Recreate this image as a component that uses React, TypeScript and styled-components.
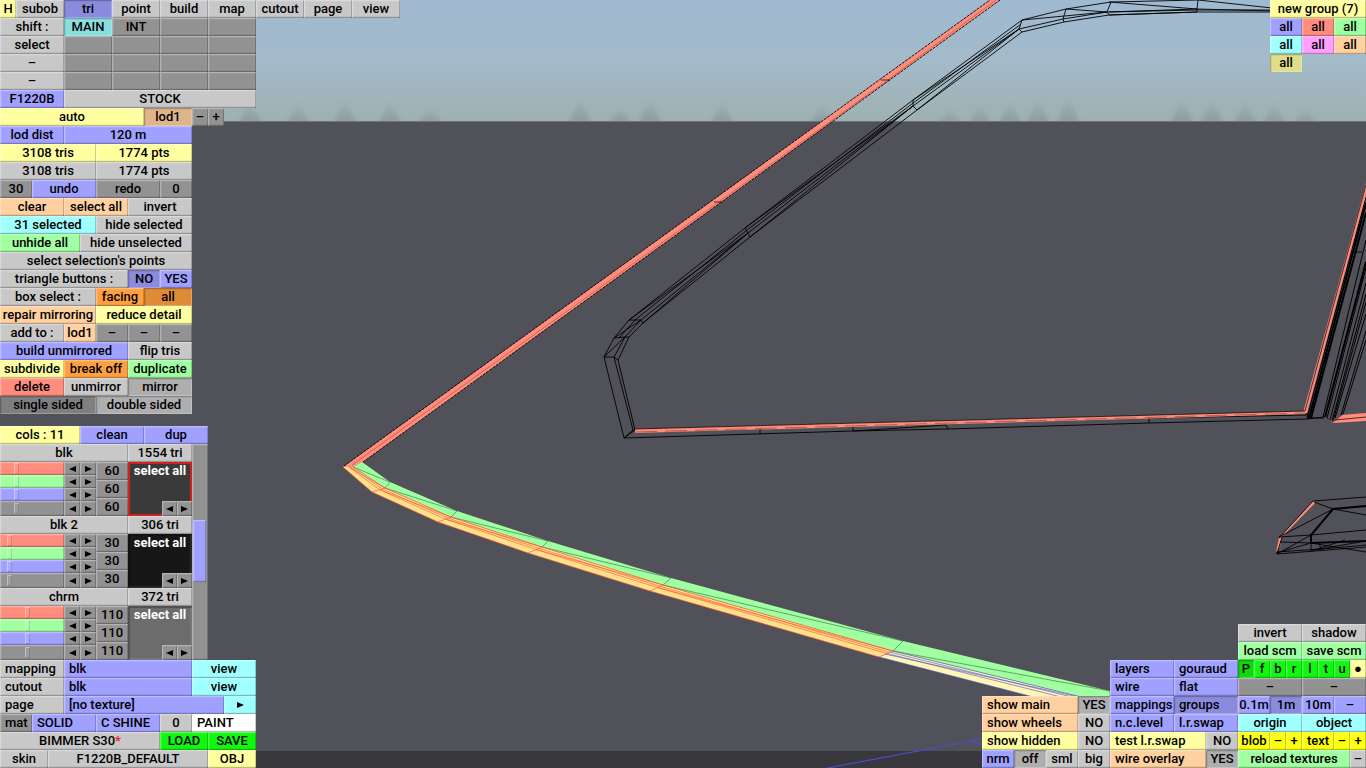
import React, { useState } from 'react';
import styled, { createGlobalStyle, css } from 'styled-components';

const UNIT = 16;

const tones = {
  grey: '#c8c8c8',
  slot: '#929292',
  dark: '#929292',
  purple: '#a0a0ff',
  yellow: '#ffffa0',
  peach: '#ffd0a0',
  cyan: '#a0ffff',
  green: '#a0ffa0',
  red: '#ff8c7c',
  orange: '#ffa040',
  pink: '#ffa0ff',
  lime: '#10f810',
  lemon: '#ffff10',
  white: '#ffffff',
};
type Tone = keyof typeof tones;

const GlobalStyle = createGlobalStyle`
  *, *::before, *::after { box-sizing: border-box; }
  body { margin: 0; background: #515159; }
  body, button, input { font-family: Roboto, "Liberation Sans", sans-serif; font-size: 13px; font-weight: 500; }
`;

const Page = styled.main`
  position: relative;
  display: flex;
  justify-content: space-between;
  min-height: 100vh;
  overflow: hidden;
`;

const Scene = styled.svg`
  position: absolute;
  inset: 0;
  width: 100%;
  height: 100%;
`;

const Side = styled.div<{ $end?: boolean }>`
  position: relative;
  display: flex;
  flex-direction: column;
  align-items: ${(p) => (p.$end ? 'flex-end' : 'flex-start')};
  justify-content: space-between;
  gap: 12px;
`;

const Stack = styled.section`
  display: flex;
  flex-direction: column;
`;

const Cluster = styled.section`
  display: flex;
  align-items: flex-end;
`;

const Row = styled.div`
  display: flex;
  height: 18px;
`;

const bevel = css<{ $down?: boolean }>`
  box-shadow: ${(p) =>
    p.$down
      ? 'inset 1px 1px 0 rgba(0,0,0,.18), inset 2px 2px 0 rgba(0,0,0,.06), inset -1px -1px 0 rgba(255,255,255,.22)'
      : 'inset 1px 1px 0 rgba(255,255,255,.26), inset 0 -1px 0 rgba(0,0,0,.22), inset -1px 0 0 rgba(0,0,0,.2), inset 0 -2px 0 rgba(0,0,0,.05), inset 2px 2px 0 rgba(255,255,255,.08)'};
`;

const cellBase = css<{ $w: number; $tone: Tone; $left?: boolean; $down?: boolean }>`
  flex: none;
  width: ${(p) => p.$w * UNIT}px;
  height: 18px;
  margin: 0;
  padding: 0 ${(p) => (p.$left ? 5 : 0)}px;
  border: 0;
  border-radius: 0;
  background-color: ${(p) => tones[p.$tone]};
  background-image: ${(p) => (p.$down ? 'linear-gradient(rgba(0,0,0,.13), rgba(0,0,0,.13))' : 'none')};
  color: #000;
  line-height: 18px;
  text-align: ${(p) => (p.$left ? 'left' : 'center')};
  white-space: nowrap;
  ${bevel}
`;

const Button = styled.button`
  ${cellBase}
  cursor: pointer;
`;
const Label = styled.span`
  ${cellBase}
`;
const Field = styled.input`
  ${cellBase}
  outline: none;
`;

const Star = styled.span`
  color: #ff2020;
  font-weight: 700;
`;

const Browser = styled.div`
  display: flex;
`;

const Card = styled.div`
  display: flex;
  flex-direction: column;
`;

const CardBody = styled.div`
  display: flex;
  height: 54px;
`;

const Channels = styled.div`
  display: grid;
  grid-template-columns: 64px 16px 16px;
  grid-template-rows: 13px 13px 13px 15px;
`;

const Slider = styled.input<{ $tone: Tone }>`
  appearance: none;
  width: 100%;
  height: 100%;
  margin: 0;
  background: ${(p) => tones[p.$tone]};
  ${bevel}
  &::-webkit-slider-thumb {
    appearance: none;
    width: 5px;
    height: 11px;
    background: rgba(255, 255, 255, 0.1);
    box-shadow: inset 1px 1px 0 rgba(255, 255, 255, 0.35), inset -1px -1px 0 rgba(0, 0, 0, 0.15);
  }
`;

const ArrowButton = styled.button<{ $cyan?: boolean; $wide?: boolean }>`
  display: flex;
  align-items: center;
  justify-content: center;
  flex: 0 0 ${(p) => (p.$wide ? 32 : 15)}px;
  padding: 0;
  border: 0;
  background: ${(p) => (p.$cyan ? tones.cyan : tones.slot)};
  cursor: pointer;
  ${bevel}
`;

const Values = styled.div`
  display: flex;
  flex-direction: column;
  width: 32px;
`;

const Value = styled.output`
  height: 18px;
  background: ${tones.slot};
  line-height: 18px;
  text-align: center;
  ${bevel}
`;

const Swatch = styled.div<{ $colour: string; $active?: boolean }>`
  display: flex;
  flex-direction: column;
  justify-content: space-between;
  width: 64px;
  background: ${(p) => p.$colour};
  box-shadow: ${(p) =>
    p.$active ? 'inset 0 0 0 2px #d02020' : 'inset 2px 2px 0 rgba(0,0,0,.25), inset -2px -2px 0 rgba(255,255,255,.08)'};
`;

const SwatchButton = styled.button`
  height: 18px;
  padding: 0;
  border: 0;
  background: none;
  color: #fff;
  font-weight: 700;
  line-height: 18px;
  white-space: nowrap;
  cursor: pointer;
`;

const SwatchArrows = styled.div`
  display: flex;
  justify-content: flex-end;
  height: 15px;
`;

const ScrollTrack = styled.div`
  width: 16px;
  padding: 76px 2px 0 1px;
  background: ${tones.slot};
  ${bevel}
`;

const ScrollThumb = styled.div`
  height: 62px;
  background: ${tones.purple};
  ${bevel}
`;

interface Cell {
  t: React.ReactNode;
  w: number;
  tone?: Tone;
  down?: boolean;
  left?: boolean;
  kind?: 'label' | 'field';
  name?: string;
}

const b = (t: React.ReactNode, w: number, tone: Tone = 'grey', down = false): Cell => ({ t, w, tone, down });
const bl = (t: React.ReactNode, w: number, tone: Tone = 'grey', down = false): Cell => ({ t, w, tone, down, left: true });
const l = (t: React.ReactNode, w: number, tone: Tone = 'grey', left = false): Cell => ({ t, w, tone, left, kind: 'label' });
const f = (t: string, w: number, tone: Tone, name: string, left = true): Cell => ({ t, w, tone, left, kind: 'field', name });
const slots = (n: number): Cell[] => Array.from({ length: n }, () => l('', 3, 'slot'));

function Cells({ rows }: { rows: Cell[][] }) {
  return (
    <>
      {rows.map((row, i) => (
        <Row key={i}>
          {row.map((c, j) => {
            const style = { $w: c.w, $tone: c.tone ?? ('grey' as Tone), $left: c.left, $down: c.down };
            if (c.kind === 'label') return <Label key={j} {...style}>{c.t}</Label>;
            if (c.kind === 'field')
              return <Field key={j} {...style} type="text" aria-label={c.name} defaultValue={c.t as string} />;
            return <Button key={j} type="button" aria-pressed={c.down} {...style}>{c.t}</Button>;
          })}
        </Row>
      ))}
    </>
  );
}

const menuRows: Cell[][] = [
  [b('H', 1, 'yellow'), b('subob', 3), b('tri', 3, 'purple', true), b('point', 3), b('build', 3), b('map', 3), b('cutout', 3), b('page', 3), b('view', 3)],
  [l('shift :', 4), b('MAIN', 3, 'cyan', true), b('INT', 3, 'dark'), ...slots(2)],
  [b('select', 4), ...slots(4)],
  [b('–', 4), ...slots(4)],
  [b('–', 4), ...slots(4)],
  [b('F1220B', 4, 'purple'), b('STOCK', 12)],
  [b('auto', 9, 'yellow'), b('lod1', 3, 'peach', true), b('–', 1, 'dark'), b('+', 1, 'dark')],
  [l('lod dist', 4, 'purple'), f('120 m', 8, 'purple', 'lod dist', false)],
  [l('3108 tris', 6, 'yellow'), l('1774 pts', 6, 'yellow')],
  [l('3108 tris', 6), l('1774 pts', 6)],
  [l('30', 2, 'dark'), b('undo', 4, 'purple'), b('redo', 4, 'dark'), l('0', 2, 'dark')],
  [b('clear', 4, 'peach'), b('select all', 4, 'peach'), b('invert', 4)],
  [b('31 selected', 6, 'cyan'), b('hide selected', 6)],
  [b('unhide all', 5, 'green'), b('hide unselected', 7)],
  [b("select selection's points", 12)],
  [l('triangle buttons :', 8), b('NO', 2, 'purple', true), b('YES', 2, 'purple')],
  [l('box select :', 6), b('facing', 3, 'orange'), b('all', 3, 'orange', true)],
  [b('repair mirroring', 6, 'peach'), b('reduce detail', 6, 'yellow')],
  [l('add to :', 4), b('lod1', 2, 'peach'), b('–', 2, 'dark'), b('–', 2, 'dark'), b('–', 2, 'dark')],
  [b('build unmirrored', 8, 'purple'), b('flip tris', 4)],
  [b('subdivide', 4, 'yellow'), b('break off', 4, 'orange'), b('duplicate', 4, 'green')],
  [b('delete', 4, 'red'), b('unmirror', 4), b('mirror', 4, 'grey', true)],
  [b('single sided', 6, 'dark', true), b('double sided', 6, 'grey', true)],
];

const paletteRows: Cell[][] = [[l('cols : 11', 5, 'yellow'), b('clean', 4, 'purple'), b('dup', 4, 'purple')]];

const materialRows: Cell[][] = [
  [bl('mat', 2, 'dark'), bl('SOLID', 4, 'purple'), bl('C SHINE', 4, 'purple'), b('0', 2), bl('PAINT', 4, 'white')],
  [b(<>BIMMER S30<Star>*</Star></>, 10), b('LOAD', 3, 'lime'), b('SAVE', 3, 'lime')],
  [b('skin', 3), b('F1220B_DEFAULT', 10), b('OBJ', 3, 'yellow')],
];

const mappingRows: Cell[][] = [
  [l('mapping', 4, 'grey', true), f('blk', 8, 'purple', 'mapping'), b('view', 4, 'cyan')],
  [l('cutout', 4, 'grey', true), f('blk', 8, 'purple', 'cutout'), b('view', 4, 'cyan')],
];

const groupRows: Cell[][] = [
  [b('new group (7)', 6, 'yellow')],
  [b('all', 2, 'purple'), b('all', 2, 'red'), b('all', 2, 'green')],
  [b('all', 2, 'cyan'), b('all', 2, 'pink'), b('all', 2, 'peach')],
  [b('all', 2, 'yellow', true)],
];

const showRows: Cell[][] = [
  [bl('show main', 6, 'peach'), b('YES', 2, 'grey', true)],
  [bl('show wheels', 6, 'peach'), b('NO', 2)],
  [bl('show hidden', 6, 'yellow'), b('NO', 2)],
  [b('nrm', 2, 'purple'), b('off', 2, 'grey', true), b('sml', 2), b('big', 2)],
];

const layerRows: Cell[][] = [
  [bl('layers', 4, 'purple'), bl('gouraud', 4, 'purple')],
  [bl('wire', 4, 'purple'), bl('flat', 4, 'purple')],
  [bl('mappings', 4, 'purple'), bl('groups', 4, 'purple', true)],
  [bl('n.c.level', 4, 'purple'), bl('l.r.swap', 4, 'purple')],
  [bl('test l.r.swap', 6, 'yellow'), b('NO', 2)],
  [bl('wire overlay', 6, 'peach'), b('YES', 2, 'grey', true)],
];

const viewRows: Cell[][] = [
  [b('invert', 4), b('shadow', 4)],
  [b('load scm', 4, 'green'), b('save scm', 4, 'green')],
  [b('P', 1, 'lime', true), ...['f', 'b', 'r', 'l', 't', 'u'].map((k) => b(k, 1, 'lime')), b('●', 1, 'yellow')],
  [b('–', 4, 'dark'), b('–', 4, 'dark')],
  [b('0.1m', 2, 'purple'), b('1m', 2, 'purple', true), b('10m', 2, 'purple'), b('–', 2, 'purple')],
  [b('origin', 4, 'cyan'), b('object', 4, 'cyan')],
  [b('blob', 2, 'lemon'), b('–', 1, 'lemon'), b('+', 1, 'lemon'), b('text', 2, 'lemon'), b('–', 1, 'lemon'), b('+', 1, 'lemon')],
  [b('reload textures', 7, 'green'), b('–', 1)],
];

function Arrow({ dir, name, cyan, wide }: { dir: 'left' | 'right'; name: string; cyan?: boolean; wide?: boolean }) {
  return (
    <ArrowButton type="button" aria-label={name} $cyan={cyan} $wide={wide}>
      <svg width="9" height="8" viewBox="0 0 9 8" aria-hidden="true">
        <path d={dir === 'left' ? 'M8 1v6L1 4z' : 'M1 1v6L8 4z'} fill="#000" />
      </svg>
    </ArrowButton>
  );
}

const channelTones: [string, Tone][] = [['red', 'red'], ['green', 'green'], ['blue', 'purple'], ['all', 'slot']];

function Material({ name, tris, start, colour, active }: { name: string; tris: number; start: number; colour: string; active?: boolean }) {
  const [rgb, setRgb] = useState([start, start, start]);
  return (
    <Card>
      <Cells rows={[[b(name, 8), l(`${tris} tri`, 4)]]} />
      <CardBody>
        <Channels>
          {channelTones.map(([channel, tone], i) => (
            <React.Fragment key={channel}>
              <Slider
                type="range"
                min={0}
                max={255}
                $tone={tone}
                aria-label={`${name} ${channel}`}
                value={rgb[i % 3]}
                onChange={(e) => {
                  const v = Number(e.target.value);
                  setRgb(i === 3 ? [v, v, v] : rgb.map((old, k) => (k === i ? v : old)));
                }}
              />
              <Arrow dir="left" name={`less ${channel}`} />
              <Arrow dir="right" name={`more ${channel}`} />
            </React.Fragment>
          ))}
        </Channels>
        <Values>
          {rgb.map((v, i) => (
            <Value key={i}>{v}</Value>
          ))}
        </Values>
        <Swatch $colour={colour} $active={active}>
          <SwatchButton type="button">select all</SwatchButton>
          <SwatchArrows>
            <Arrow dir="left" name="previous triangle" />
            <Arrow dir="right" name="next triangle" />
          </SwatchArrows>
        </Swatch>
      </CardBody>
    </Card>
  );
}

type Pt = [number, number];
const toPoints = (pts: Pt[]) => pts.map((p) => p.join(',')).join(' ');
const between = (a: Pt[], z: Pt[], t: number): Pt[] =>
  a.map((p, i) => [p[0] + (z[i][0] - p[0]) * t, p[1] + (z[i][1] - p[1]) * t] as Pt);

const sillTop: Pt[] = [[362, 462], [390, 482], [457, 511], [548, 541], [671, 578], [903, 641], [1110, 691]];
const sillMid: Pt[] = [[353, 467], [385, 488], [451, 517], [542, 547], [663, 585], [893, 651], [1110, 704]];
const trimTop = sillMid.slice(0, 6);
const trimLow: Pt[] = [[343, 467], [372, 492], [438, 522], [528, 553], [650, 591], [879, 657]];
const tailTop = sillMid.slice(5);
const tailLow: Pt[] = [[879, 657], [1068, 706]];

const frameOuter: Pt[] = [[1198, 0], [1111, 2], [1066, 9], [1022, 20], [913, 100], [745, 228], [629, 320], [614, 338], [604, 357], [624, 438]];
const frameMiddle: Pt[] = [[1197, 9], [1107, 12], [1063, 19], [1019, 29], [913, 106], [748, 233], [641, 320], [625, 337], [614, 357], [633, 430]];
const frameInner: Pt[] = [[1197, 12], [1109, 15], [1064, 22], [1022, 32], [917, 110], [750, 237], [643, 323], [629, 337], [618, 360], [635, 430]];

const trees: [number, number][] = [[250, 15], [298, 13], [345, 16], [390, 14], [430, 9], [580, 18], [620, 10], [650, 18], [722, 14], [822, 12], [950, 8], [980, 11], [1010, 14], [1038, 17], [1068, 20], [1182, 18], [1212, 17], [1245, 14], [1274, 13], [1305, 8]];

// Door pillar edges: height at the right edge, foot x, foot y, line width.
const pillarLines: [number, number, number, number][] = [
  [197, 1307, 418, 1], [203, 1309, 418, 2], [213, 1311, 418, 2], [240, 1323, 417, 1], [262, 1325, 417, 2],
  [268, 1327, 418, 1], [283, 1330, 420, 1], [294, 1332, 421, 1], [302, 1333, 421, 1], [314, 1335, 418, 1],
  [331, 1341, 415, 1], [340, 1343, 414, 1],
];

function Viewport() {
  return (
    <Scene viewBox="0 0 1366 768" preserveAspectRatio="xMidYMid slice" aria-hidden="true">
      <defs>
        <linearGradient id="sky" x1="0" y1="0" x2="0" y2="1">
          <stop offset="0" stopColor="#9fb9d1" />
          <stop offset=".5" stopColor="#a3bac9" />
          <stop offset="1" stopColor="#9eb0b1" />
        </linearGradient>
        <linearGradient id="tree" x1="0" y1="0" x2="0" y2="1">
          <stop offset="0" stopColor="#7f9193" stopOpacity="0" />
          <stop offset="1" stopColor="#7f9193" stopOpacity=".7" />
        </linearGradient>
        <filter id="soft"><feGaussianBlur stdDeviation="2" /></filter>
      </defs>
      <rect width="1366" height="122" fill="url(#sky)" />
      <g filter="url(#soft)" fill="url(#tree)">
        {trees.map(([x, h]) => (
          <path key={x} d={`M${x - 13} 126L${x} ${116 - h}L${x + 13} 126z`} />
        ))}
      </g>
      <rect y="121" width="1366" height="647" fill="#515159" />
      <rect y="121" width="1366" height="1" fill="#6b7679" />
      <rect y="751" width="1366" height="17" fill="#38383c" />

      <g fill="none" stroke="#000" strokeWidth=".9">
        {[frameOuter, frameMiddle, frameInner, between(frameOuter, frameMiddle, 0.5).slice(3, 8)].map((line, i) => (
          <polyline key={i} points={toPoints(line)} />
        ))}
        {frameOuter.map((p, i) => (
          <polyline key={i} points={toPoints([p, frameMiddle[i], frameInner[i]])} />
        ))}
        <path d="M1109 2L1197 9L1272 11M1198 0L1272 8M1109 15L1197 12L1272 12M1109 12L1197 10L1272 10" />
        <path d="M1022 20L1107 12M1066 9L1107 12M913 100L1019 29M745 228L913 106M629 320L748 233M917 110L1019 29M750 237L913 106M643 323L748 233M614 338L641 320M604 357L625 337" />
        <path d="M624 438L853 431L948 429L1149 423L1307 419L1324 417M624 438L635 430M760 434V429M853 431V427M853 431L946 425L948 429M1149 423V418L1307 415" />
        {pillarLines.map(([top, x, y, width]) => (
          <path key={top} d={`M1366 ${top}L${x} ${y}`} strokeWidth={width} />
        ))}
        <path d="M1354 252H1362M1307 413L1309 419M1307 418H1324" />
      </g>

      <g fill="#ff8c7c">
        <path d="M343 467L990 0H1000L363 462L353 467z" />
        <path d="M635 429L1305 411V414L635 433z" />
        <path d="M1303 413L1366 183V195L1307 413z" />
        <path d="M1327 418L1333 421L1341 415L1366 413V421L1333 423z" />
        <path d="M1313 501L1279 538L1276 552L1280 547L1282 537L1316 502z" />
      </g>
      <g fill="none" stroke="#000" strokeWidth=".9">
        <path d="M1327 418L1333 422L1343 414M1335 420L1366 417" strokeWidth=".7" />
        <path d="M344 466L990 0M363 462L1000 0" strokeDasharray="3 1" />
        <path d="M352 465L580 302L720 201L885 82L996 0" stroke="#a8503c" strokeWidth=".6" />
        <path d="M714 202H722M881 80H890" strokeWidth=".7" />
        <path d="M635 429L1305 411L1366 185" strokeWidth=".7" />
        <path d="M635 432L1305 413" stroke="#702c20" strokeWidth=".5" strokeDasharray="22 8" />
        <path d="M1313 501L1366 497M1314 502L1333 509L1366 515M1279 537L1333 509M1279 537L1311 535L1366 530M1311 550L1366 545M1277 554L1311 535M1280 542L1311 543L1366 552M1277 554L1366 547M1277 554L1282 537M1277 552L1320 549L1366 541M1319 542L1321 550M1311 543V551L1345 540M1276 553L1311 543M1313 501L1279 538" />
        <path d="M1366 506L1333 509L1311 535V543L1366 541" strokeWidth="2" />
      </g>

      <polygon points={toPoints([...sillTop, ...sillMid.slice().reverse()])} fill="#a0ffa0" />
      <polygon points={toPoints([...trimTop, ...trimLow.slice().reverse()])} fill="#ffe08c" />
      <polygon points={toPoints([...tailTop, ...tailLow.slice().reverse()])} fill="#fff6b4" />
      <g fill="none" stroke="#4c7c50" strokeWidth=".7">
        {sillTop.slice(1).map((p, i) => (
          <polyline key={i} points={toPoints([sillMid[i], p, sillMid[i + 1]])} />
        ))}
      </g>
      <g fill="none" stroke="#ff5030" strokeWidth=".6">
        {[0, 0.22, 0.42, 1].map((t) => (
          <polyline key={t} points={toPoints(between(trimTop, trimLow, t))} />
        ))}
        {trimTop.slice(1).map((p, i) => (
          <polyline key={i} points={toPoints([between(trimTop, trimLow, 0.42)[i], p, trimLow[i + 1]])} />
        ))}
      </g>
      <g fill="none" stroke="#4c4cd8" strokeWidth=".6">
        {[0, 0.2, 0.42, 1].map((t) => (
          <polyline key={t} points={toPoints(between(tailTop, tailLow, t))} />
        ))}
        <path d="M885 654L1110 704" />
        <path d="M827 768L972 741L984 738M972 741L984 745" strokeWidth="1.2" />
      </g>
    </Scene>
  );
}

export default function App() {
  return (
    <Page>
      <GlobalStyle />
      <Viewport />
      <Side>
        <Stack aria-label="Triangle tools"><Cells rows={menuRows} /></Stack>
        <Stack aria-label="Materials">
          <Cells rows={paletteRows} />
          <Browser>
            <Stack>
              <Material name="blk" tris={1554} start={60} colour="#3a3a3a" active />
              <Material name="blk 2" tris={306} start={30} colour="#171717" />
              <Material name="chrm" tris={372} start={110} colour="#6c6c6c" />
            </Stack>
            <ScrollTrack><ScrollThumb /></ScrollTrack>
          </Browser>
          <Cells rows={mappingRows} />
          <Row>
            <Label $w={4} $tone="grey" $left>page</Label>
            <Button type="button" $w={10} $tone="purple" $left>[no texture]</Button>
            <Arrow dir="right" name="next page" cyan wide />
          </Row>
          <Cells rows={materialRows} />
        </Stack>
      </Side>
      <Side $end>
        <Stack aria-label="Groups"><Cells rows={groupRows} /></Stack>
        <Cluster aria-label="View options">
          <Stack><Cells rows={showRows} /></Stack>
          <Stack><Cells rows={layerRows} /></Stack>
          <Stack><Cells rows={viewRows} /></Stack>
        </Cluster>
      </Side>
    </Page>
  );
}
